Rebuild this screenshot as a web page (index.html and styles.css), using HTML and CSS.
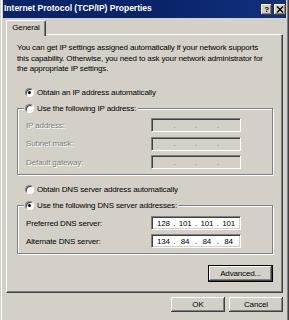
FILE: index.html
```html
<!DOCTYPE html>
<html>
<head>
<meta charset="utf-8">
<link rel="stylesheet" href="styles.css">
</head>
<body>
<div class="window">
  <div class="titlebar">
    <span class="title">Internet Protocol (TCP/IP) Properties</span>
    <div class="tbtns">
      <span class="tbtn help">?</span>
      <span class="tbtn close"><svg width="8" height="7" viewBox="0 0 8 7"><path d="M1 0.5 L7 6.5 M7 0.5 L1 6.5" stroke="#000" stroke-width="1.4"/></svg></span>
    </div>
  </div>
  <div class="tabs"><div class="tab">General</div></div>
  <div class="panel">
    <p class="intro">You can get IP settings assigned automatically if your network supports<br>this capability. Otherwise, you need to ask your network administrator for<br>the appropriate IP settings.</p>
    <div class="radio r1"><span class="rb on"></span><span>Obtain an IP address automatically</span></div>
    <fieldset class="group g1">
      <legend><span class="rb"></span><span>Use the following IP address:</span></legend>
      <div class="row"><span class="lbl off">IP address:</span><span class="ip dis"><span class="seg"></span><span class="dot">.</span><span class="seg"></span><span class="dot">.</span><span class="seg"></span><span class="dot">.</span><span class="seg"></span></span></div>
      <div class="row"><span class="lbl off">Subnet mask:</span><span class="ip dis"><span class="seg"></span><span class="dot">.</span><span class="seg"></span><span class="dot">.</span><span class="seg"></span><span class="dot">.</span><span class="seg"></span></span></div>
      <div class="row"><span class="lbl off">Default gateway:</span><span class="ip dis"><span class="seg"></span><span class="dot">.</span><span class="seg"></span><span class="dot">.</span><span class="seg"></span><span class="dot">.</span><span class="seg"></span></span></div>
    </fieldset>
    <div class="radio r3"><span class="rb"></span><span>Obtain DNS server address automatically</span></div>
    <fieldset class="group g2">
      <legend><span class="rb on"></span><span>Use the following DNS server addresses:</span></legend>
      <div class="row"><span class="lbl">Preferred DNS server:</span><span class="ip"><span class="seg">128</span><span class="dot">.</span><span class="seg">101</span><span class="dot">.</span><span class="seg">101</span><span class="dot">.</span><span class="seg">101</span></span></div>
      <div class="row"><span class="lbl">Alternate DNS server:</span><span class="ip"><span class="seg">134</span><span class="dot">.</span><span class="seg">84</span><span class="dot">.</span><span class="seg">84</span><span class="dot">.</span><span class="seg">84</span></span></div>
    </fieldset>
    <div class="adv-row"><span class="btn default adv">Advanced...</span></div>
  </div>
  <div class="footer">
    <span class="btn ok">OK</span>
    <span class="btn cancel">Cancel</span>
  </div>
</div>
</body>
</html>
```
FILE: styles.css
```css
html, body {
  margin: 0;
  background: #d4d0c8;
}
body {
  font-family: "Liberation Sans", Arial, sans-serif;
  font-size: 8px;
  letter-spacing: -0.15px;
  color: #000;
}
.window {
  width: 289px;
  height: 320px;
  box-sizing: border-box;
  padding: 0 6px;
  background: #d4d0c8;
  box-shadow: inset 1px 0 #d4d0c8, inset 2px 0 #fff, inset -1px 0 #404040, inset -2px 0 #808080;
  overflow: hidden;
}
.titlebar {
  margin: 0 -3px;
  height: 18px;
  background: linear-gradient(90deg, #0a246a 0%, #0a246a 55%, #12307c 100%);
  display: flex;
  justify-content: space-between;
  align-items: flex-start;
}
.title {
  color: #fff;
  font-weight: bold;
  font-size: 8.5px;
  letter-spacing: 0;
  line-height: 17px;
  padding-left: 1px;
  white-space: nowrap;
}
.tbtns {
  display: flex;
  gap: 2px;
  margin-top: 4px;
}
.tbtn {
  height: 11px;
  background: #d4d0c8;
  box-shadow: inset -1px -1px #404040, inset 1px 1px #fff, inset -2px -2px #808080;
  display: flex;
  align-items: center;
  justify-content: center;
  font-weight: bold;
  font-size: 8px;
  line-height: 11px;
}
.help { width: 11px; }
.close { width: 12px; }
.close svg { display: block; margin-top: -1px; }

.tabs {
  height: 14px;
  margin-top: 2px;
  display: flex;
  position: relative;
  z-index: 1;
}
.tab {
  width: 40px;
  height: 16px;
  box-sizing: border-box;
  border-top: 1px solid #fff;
  border-left: 1px solid #fff;
  border-right: 1px solid #404040;
  box-shadow: inset -1px 0 #808080;
  border-radius: 2px 2px 0 0;
  background: #d4d0c8;
  text-align: center;
  line-height: 14px;
}
.panel {
  height: 259px;
  box-sizing: border-box;
  border-top: 1px solid #fff;
  border-left: 1px solid #fff;
  border-right: 1px solid #404040;
  border-bottom: 1px solid #404040;
  box-shadow: inset -1px -1px #808080;
  padding: 8px 0 0 10px;
}
.intro {
  margin: 0;
  line-height: 10.5px;
  white-space: nowrap;
}
.radio {
  display: flex;
  align-items: center;
  gap: 3px;
  height: 10px;
  padding-left: 8px;
}
.r1 { margin-top: 12.5px; }
.r3 { margin-top: 9px; }
.rb {
  width: 9px;
  height: 9px;
  box-sizing: border-box;
  border-radius: 50%;
  background: #fff;
  border: 1px solid;
  border-color: #808080 #fff #fff #808080;
  box-shadow: inset 1px 1px #404040;
  position: relative;
  flex: none;
}
.rb.on::after {
  content: "";
  position: absolute;
  left: 2px;
  top: 2px;
  width: 3px;
  height: 3px;
  border-radius: 50%;
  background: #000;
}
.group {
  width: 256px;
  box-sizing: border-box;
  margin: 6px 0 0 0;
  min-width: 0;
  padding: 5px 8px 5px 8px;
  border: 1px solid #808080;
  box-shadow: inset 1px 1px #fff, 1px 1px #fff;
  display: flex;
  flex-direction: column;
}
.g1 { gap: 4.5px; }
.g2 { gap: 4px; padding-top: 6px; }
.group legend {
  display: flex;
  align-items: center;
  gap: 3px;
  height: 10px;
  margin-left: -2px;
  padding: 0 2px 0 1px;
  background: #d4d0c8;
}
.row {
  display: flex;
  align-items: center;
  height: 14px;
}
.lbl {
  width: 125px;
  flex: none;
  white-space: nowrap;
}
.lbl.off {
  color: #808080;
  text-shadow: 1px 1px 0 #fff;
}
.ip {
  width: 90px;
  height: 14px;
  box-sizing: border-box;
  border: 1px solid;
  border-color: #808080 #fff #fff #808080;
  box-shadow: inset 1px 1px #404040, inset -1px -1px #d4d0c8;
  background: #fff;
  display: flex;
  align-items: center;
  padding: 0 2px 0 2px;
}
.ip.dis {
  background: #d4d0c8;
  color: #808080;
}
.seg {
  flex: 1;
  text-align: center;
}
.dot {
  width: 3px;
  text-align: center;
}
.adv-row {
  width: 256px;
  display: flex;
  justify-content: flex-end;
  margin-top: 11px;
}
.btn {
  display: flex;
  align-items: center;
  justify-content: center;
  box-sizing: border-box;
  background: #d4d0c8;
  box-shadow: inset -1px -1px #404040, inset 1px 1px #fff, inset -2px -2px #808080;
}
.adv {
  width: 65px;
  height: 17px;
  border: 1px solid #000;
}
.footer {
  display: flex;
  justify-content: flex-end;
  gap: 4px;
  margin-top: 4px;
}
.ok, .cancel {
  width: 54px;
  height: 15px;
}
```
